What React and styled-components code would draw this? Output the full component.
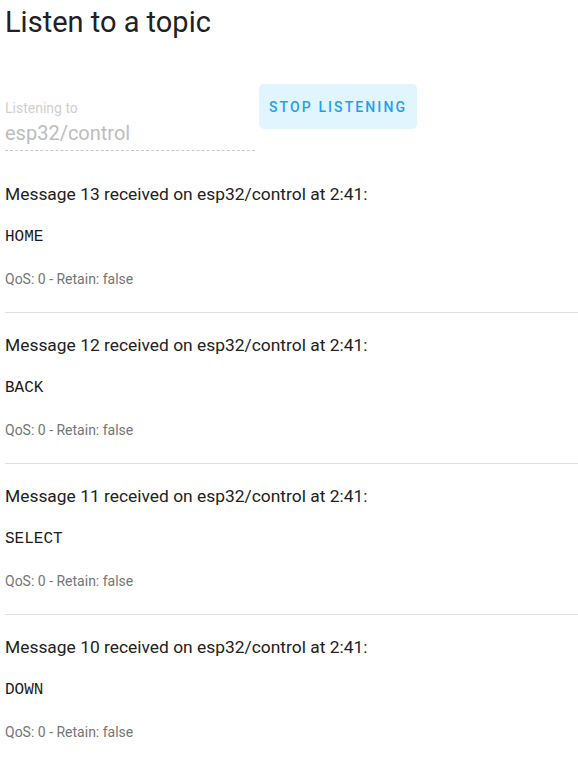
import React from "react";
import styled, { createGlobalStyle } from "styled-components";

const GlobalStyle = createGlobalStyle`
  html, body {
    margin: 0;
    padding: 0;
    background: #fff;
  }
  body {
    font-family: Roboto, "Liberation Sans", sans-serif;
    color: #212121;
  }
`;

const Page = styled.div`
  padding-left: 5px;
`;

const Title = styled.h1`
  margin: 0;
  font-size: 29px;
  line-height: 44px;
  font-weight: 400;
  color: #212121;
`;

const Controls = styled.div`
  display: flex;
  align-items: flex-start;
  gap: 4px;
  margin-top: 40px;
`;

const Field = styled.div`
  width: 250px;
  padding: 16px 0 5px;
  border-bottom: 1px dashed #c8c8c8;
`;

const Label = styled.div`
  font-size: 14px;
  line-height: 16px;
  color: #cfcfcf;
`;

const Value = styled.div`
  margin-top: 5px;
  font-size: 20px;
  line-height: 24px;
  color: #bdbdbd;
`;

const Button = styled.button`
  height: 45px;
  padding: 0 10px;
  border: none;
  border-radius: 5px;
  background: #e1f5fe;
  color: #1e9ff0;
  font-family: Roboto, "Liberation Sans", sans-serif;
  font-size: 14px;
  font-weight: 500;
  letter-spacing: 2.1px;
  text-transform: uppercase;
  cursor: pointer;
`;

const List = styled.div``;

const Item = styled.div`
  padding: ${(p) => (p.$first ? "31px" : "20px")} 0 24px;
  border-bottom: 1px solid #e0e0e0;
`;

const Heading = styled.div`
  font-size: 17.4px;
  line-height: 24px;
  color: #212121;
`;

const Payload = styled.pre`
  margin: 21px 0 0;
  font-family: "Liberation Mono", "DejaVu Sans Mono", monospace;
  font-size: 16px;
  line-height: 20px;
  color: #1a1a1a;
`;

const Meta = styled.div`
  margin-top: 23px;
  font-size: 14px;
  line-height: 18px;
  color: #757575;
`;

const messages = [
  { id: 13, payload: "HOME" },
  { id: 12, payload: "BACK" },
  { id: 11, payload: "SELECT" },
  { id: 10, payload: "DOWN" },
];

export default function App() {
  return (
    <Page>
      <GlobalStyle />
      <Title>Listen to a topic</Title>
      <Controls>
        <Field>
          <Label>Listening to</Label>
          <Value>esp32/control</Value>
        </Field>
        <Button>Stop listening</Button>
      </Controls>
      <List>
        {messages.map((m, i) => (
          <Item key={m.id} $first={i === 0}>
            <Heading>
              Message {m.id} received on esp32/control at 2:41:
            </Heading>
            <Payload>{m.payload}</Payload>
            <Meta>QoS: 0 - Retain: false</Meta>
          </Item>
        ))}
      </List>
    </Page>
  );
}
